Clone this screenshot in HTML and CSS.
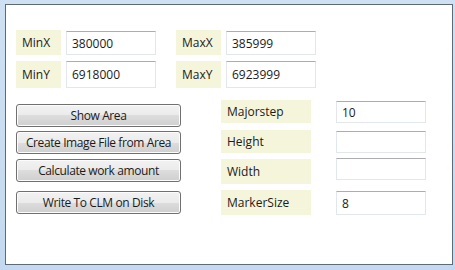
FILE: index.html
```html
<!DOCTYPE html>
<html>
  <head>
    <meta name="viewport" content="width=device-width, initial-scale=1.0">
    <link rel="stylesheet" href="styles.css">
  </head>
  <body>
    <div class="window">
      <div class="client">
        <div class="coords">
          <div class="coord-group">
            <div class="label">MinX</div>
            <input class="box" type="text" value="380000">
            <div class="label row2">MinY</div>
            <input class="box row2" type="text" value="6918000">
          </div>
          <div class="coord-group">
            <div class="label">MaxX</div>
            <input class="box" type="text" value="385999">
            <div class="label row2">MaxY</div>
            <input class="box row2" type="text" value="6923999">
          </div>
        </div>

        <div class="actions">
          <button class="btn r1">Show Area</button>
          <div class="label r1">Majorstep</div>
          <input class="box r1" type="text" value="10">

          <button class="btn r2">Create Image File from Area</button>
          <div class="label r2">Height</div>
          <input class="box r2" type="text" value="">

          <button class="btn r3">Calculate work amount</button>
          <div class="label r3">Width</div>
          <input class="box r3" type="text" value="">

          <button class="btn r4">Write To CLM on Disk</button>
          <div class="label r4">MarkerSize</div>
          <input class="box r4" type="text" value="8">
        </div>
      </div>
    </div>
  </body>
</html>
```

FILE: styles.css
```css
/* Window frame */
body {
  margin: 0;
  background: linear-gradient(#cfe0f3, #c4d9f0);
  font-family: "Open Sans", "Noto Sans", sans-serif;
  font-size: 12px;
  color: #1b1b1b;
}

.window {
  height: 270px;
  padding: 4px 2px 5px 5px;
  box-sizing: border-box;
}

.client {
  height: 100%;
  box-sizing: border-box;
  background: #ffffff;
  border: 1px solid #5d6b79;
  padding: 25px 0 0 10px;
}

/* Min / Max coordinate boxes */
.coords {
  display: flex;
  gap: 20px;
}

.coord-group {
  display: grid;
  grid-template-columns: 45px 90px;
  grid-template-rows: 25px 27px;
  column-gap: 5px;
  row-gap: 6px;
}

.label {
  background-color: #f5f5dc;
  padding-left: 6px;
  display: flex;
  align-items: center;
}

.box {
  font-family: inherit;
  font-size: 12px;
  color: #1b1b1b;
  margin: 0;
  padding: 0 0 0 5px;
  border: 1px solid #e2e7ee;
  border-top-color: #abadb3;
  background: #fff;
  box-sizing: border-box;
  outline: none;
}

.coord-group .box {
  height: 24px;
  margin-top: 1px;
}

.coord-group .row2.box {
  height: 27px;
  margin-top: 0;
}

/* Buttons and settings */
.actions {
  display: grid;
  grid-template-columns: 165px 90px 90px;
  grid-template-rows: 30px 28px 31px 27px;
  column-gap: 40px;
  margin-top: 12px;
}

.actions .label {
  height: 23px;
}

.actions .box {
  height: 22px;
  margin: 1px 15px 0 -15px;
}

.btn {
  font-family: inherit;
  font-size: 12px;
  letter-spacing: -0.4px;
  color: #1b1b1b;
  height: 23px;
  margin: 0;
  padding: 0;
  border: 1px solid #707070;
  border-radius: 3px;
  background: linear-gradient(#f2f2f2 0%, #ebebeb 50%, #dddddd 50%, #cfcfcf 100%);
  box-shadow: inset 0 0 0 1px #fcfcfc;
}

.r1 { grid-row: 1; }
.r2 { grid-row: 2; }
.r3 { grid-row: 3; }
.r4 { grid-row: 4; }

.btn.r1 { margin-top: 4px; }
.btn.r2 { margin-top: 1px; }
.btn.r3 { margin-top: 1px; }
.btn.r4 { margin-top: 2px; }

.actions .label.r3 { height: 25px; margin-top: 1px; }
.actions .label.r4 { height: 25px; margin-top: 1px; }
.actions .box.r3 { margin-top: 0; }
.actions .box.r4 { height: 24px; margin-top: 2px; }
```
